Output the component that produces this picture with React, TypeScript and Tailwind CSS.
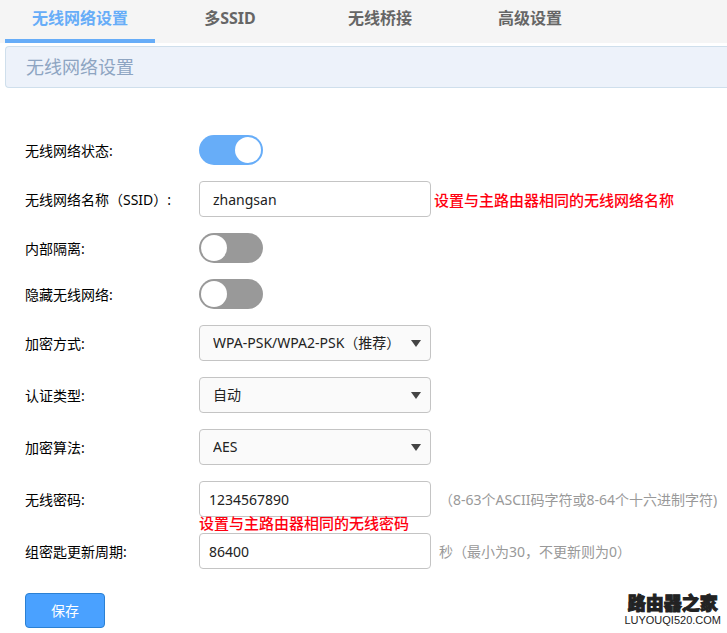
import { useState } from "react";
import type { ReactNode } from "react";

const TABS = ["无线网络设置", "多SSID", "无线桥接", "高级设置"];

const FIELD =
  "h-9 w-[232px] rounded border border-[#c4c4c4] text-sm text-[#222222] outline-none";

const HINT = "ml-2 pt-px text-sm whitespace-nowrap text-[#999999]";

function Row({
  id,
  label,
  children,
}: {
  id: string;
  label: string;
  children: ReactNode;
}) {
  return (
    <div className="flex items-center">
      <label htmlFor={id} className="w-[174px] shrink-0 pt-0.5 text-sm text-black">
        {label}
      </label>
      {children}
    </div>
  );
}

function Toggle({ id, defaultOn = false }: { id: string; defaultOn?: boolean }) {
  return (
    <input
      id={id}
      type="checkbox"
      role="switch"
      defaultChecked={defaultOn}
      className="h-[30px] w-16 cursor-pointer appearance-none rounded-full bg-[#999999] p-0.5 before:block before:size-[26px] before:rounded-full before:bg-white checked:bg-[#67adf8] checked:before:ml-[34px]"
    />
  );
}

function Select({ id, options }: { id: string; options: string[] }) {
  return (
    <div className="relative">
      <select
        id={id}
        className={`${FIELD} block appearance-none bg-[#fafafa] pr-8 pl-[13px]`}
      >
        {options.map((option) => (
          <option key={option}>{option}</option>
        ))}
      </select>
      <svg
        viewBox="0 0 10 7"
        className="pointer-events-none absolute top-[15px] right-[10px] h-[7px] w-[10px] fill-[#444444]"
        aria-hidden="true"
      >
        <path d="M0 0h10L5 7z" />
      </svg>
    </div>
  );
}

export default function App() {
  const [active, setActive] = useState(0);

  return (
    <div className="overflow-hidden bg-white font-['Noto_Sans','Noto_Sans_CJK_SC',sans-serif]">
      <nav className="flex bg-[#f5f5f5] pl-[5px]">
        {TABS.map((tab, i) => (
          <button
            key={tab}
            type="button"
            onClick={() => setActive(i)}
            className={`h-[43px] w-[150px] border-b-4 pb-1 text-base leading-6 font-bold ${
              i === active
                ? "border-[#67adf8] text-[#67adf8]"
                : "border-transparent text-[#666666]"
            }`}
          >
            {tab}
          </button>
        ))}
      </nav>

      <main>
        <h1 className="mt-[3px] ml-[5px] flex h-[42px] items-center rounded-l border border-r-0 border-[#cfdfec] bg-[#edf2fa] pl-5 text-lg font-normal text-[#8ea5c2]">
          {TABS[0]}
        </h1>

        <form
          className="mt-[47px] pl-[25px]"
          onSubmit={(event) => event.preventDefault()}
        >
          <div className="flex flex-col gap-4">
            <Row id="state" label="无线网络状态:">
              <Toggle id="state" defaultOn />
            </Row>
            <Row id="ssid" label="无线网络名称（SSID）:">
              <input
                id="ssid"
                type="text"
                defaultValue="zhangsan"
                className={`${FIELD} bg-white px-[13px]`}
              />
              <span className="ml-[3px] pt-0.5 text-[15px] font-medium whitespace-nowrap text-[#ff0010]">
                设置与主路由器相同的无线网络名称
              </span>
            </Row>
            <Row id="isolation" label="内部隔离:">
              <Toggle id="isolation" />
            </Row>
            <Row id="hidden" label="隐藏无线网络:">
              <Toggle id="hidden" />
            </Row>
            <Row id="security" label="加密方式:">
              <Select id="security" options={["WPA-PSK/WPA2-PSK（推荐）"]} />
            </Row>
            <Row id="auth" label="认证类型:">
              <Select id="auth" options={["自动"]} />
            </Row>
            <Row id="cipher" label="加密算法:">
              <Select id="cipher" options={["AES"]} />
            </Row>
            <Row id="password" label="无线密码:">
              <div className="relative">
                <input
                  id="password"
                  type="text"
                  defaultValue="1234567890"
                  className={`${FIELD} block bg-white px-[9px]`}
                />
                <span className="absolute top-full left-0 text-[15px] leading-3 font-medium whitespace-nowrap text-[#ff0010]">
                  设置与主路由器相同的无线密码
                </span>
              </div>
              <span className={HINT}>
                （8-63个ASCII码字符或8-64个十六进制字符)
              </span>
            </Row>
            <Row id="interval" label="组密匙更新周期:">
              <input
                id="interval"
                type="text"
                defaultValue="86400"
                className={`${FIELD} bg-white px-[9px]`}
              />
              <span className={HINT}>秒（最小为30，不更新则为0）</span>
            </Row>
          </div>

          <div className="mt-6 flex items-start justify-between pr-[6px]">
            <button
              type="submit"
              className="h-[35px] w-20 rounded border border-[#2b80d3] bg-[#4aa1ff] text-sm text-white"
            >
              保存
            </button>
            <div className="text-center text-[#222222]">
              <div className="text-[18px] leading-5 font-black [-webkit-text-stroke:1px_#222222]">
                路由器之家
              </div>
              <div className="font-['Liberation_Sans',sans-serif] text-[11px] leading-[14px]">
                LUYOUQI520.COM
              </div>
            </div>
          </div>
        </form>
      </main>
    </div>
  );
}
